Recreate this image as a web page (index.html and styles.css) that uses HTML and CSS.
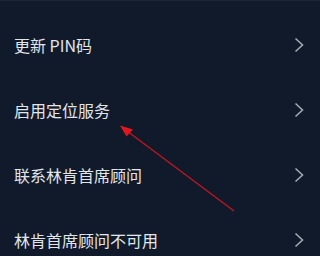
FILE: index.html
```html
<!DOCTYPE html>
<html lang="zh">
<head>
<meta charset="utf-8">
<link rel="stylesheet" href="styles.css">
</head>
<body>
<div class="screen">
  <ul class="menu">
    <li class="row"><span class="label">更新 PIN码</span><svg class="chev" viewBox="0 0 10 16"><polyline points="1.5,1.5 8.5,8 1.5,14.5"/></svg></li>
    <li class="row"><span class="label">启用定位服务</span><svg class="chev" viewBox="0 0 10 16"><polyline points="1.5,1.5 8.5,8 1.5,14.5"/></svg></li>
    <li class="row"><span class="label">联系林肯首席顾问</span><svg class="chev" viewBox="0 0 10 16"><polyline points="1.5,1.5 8.5,8 1.5,14.5"/></svg></li>
    <li class="row"><span class="label">林肯首席顾问不可用</span><svg class="chev" viewBox="0 0 10 16"><polyline points="1.5,1.5 8.5,8 1.5,14.5"/></svg></li>
  </ul>
  <svg class="annotation" viewBox="0 0 320 256" width="320" height="256">
    <line x1="234" y1="211" x2="127" y2="131" />
    <polygon points="120,125.5 133,129.5 126.5,136.5" />
  </svg>
</div>
</body>
</html>
```

FILE: styles.css
```css
html, body {
  margin: 0;
  padding: 0;
  background: #111a2a;
}
.screen {
  position: relative;
  width: 320px;
  height: 256px;
  overflow: hidden;
  background: #111a2a;
  border-top: 1px solid #1d2638;
  box-sizing: border-box;
  font-family: "Noto Sans CJK SC", "Noto Sans", sans-serif;
}
.menu {
  list-style: none;
  margin: 0;
  padding: 11px 0 0 0;
}
.row {
  display: flex;
  align-items: center;
  justify-content: space-between;
  height: 65px;
  padding: 0 16px 0 14px;
}
.label {
  color: #e2e5ea;
  font-size: 16px;
  line-height: 20px;
}
.chev {
  width: 10px;
  height: 16px;
  fill: none;
  stroke: #a3a9b3;
  stroke-width: 1.6;
}
.annotation {
  position: absolute;
  left: 0;
  top: -1px;
  pointer-events: none;
}
.annotation line {
  stroke: #c01620;
  stroke-width: 1.4;
}
.annotation polygon {
  fill: #e01820;
}
```
